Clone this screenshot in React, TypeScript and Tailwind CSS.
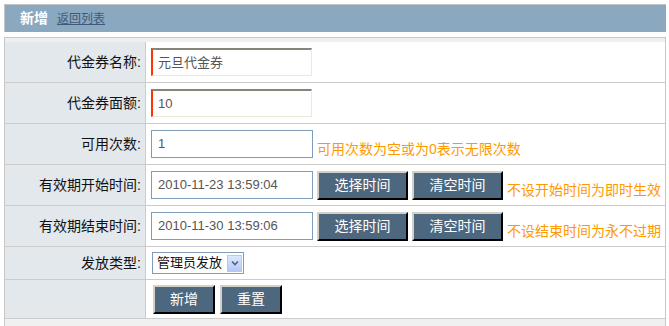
import React from "react";

const font = { fontFamily: '"Liberation Sans", "Noto Sans CJK SC", sans-serif' };

function Label({ text }: { text: string }) {
  return (
    <div className="w-[141px] shrink-0 self-stretch flex items-center justify-end pr-[4px] bg-[#e3e8ec] border-r border-[#cccccc] text-[14px] text-[#111]">
      {text}
    </div>
  );
}

function Row({ label, h = "h-[41px]", children }: { label: string; h?: string; children?: React.ReactNode }) {
  return (
    <div className={`flex ${h} border-b border-[#cccccc]`}>
      <Label text={label} />
      <div className="flex-1 flex items-center pl-[5px] bg-white">{children}</div>
    </div>
  );
}

function RedInput({ value }: { value: string }) {
  return (
    <div className="w-[161px] h-[28px] bg-white border-t-2 border-t-[#87847a] border-l-2 border-l-[#ff3300] border-r border-r-[#ece9d8] border-b border-b-[#ece9d8] flex items-center pl-[5px] text-[13px] text-[#555]">
      {value}
    </div>
  );
}

function BlueInput({ value }: { value: string }) {
  return (
    <div className="w-[162px] h-[28px] bg-white border border-[#7f9db9] flex items-center pl-[6px] text-[13px] text-[#555]">
      {value}
    </div>
  );
}

function Btn({ text, w = "w-[91px]" }: { text: string; w?: string }) {
  return (
    <div className={`${w} h-[29px] bg-[#4d677e] border-2 border-t-[#d4d0c8] border-l-[#d4d0c8] border-r-black border-b-black flex items-center justify-center text-white text-[14px]`}>
      {text}
    </div>
  );
}

function Hint({ text }: { text: string }) {
  return <span className="text-[14px] text-[#ff9900] pt-[10px] pl-[4px] whitespace-nowrap">{text}</span>;
}

export default function App() {
  return (
    <div className="w-[669px] h-[326px] bg-white overflow-hidden pt-[4px] pl-[4px]" style={font}>
      <div className="w-[662px] h-[28px] bg-[#8aa8c0] border-t border-l border-[#c4c4c4] flex items-center pl-[15px]">
        <span className="text-white font-bold text-[14px]">新增</span>
        <span className="ml-[9px] text-[12px] text-[#3f5a78] underline">返回列表</span>
      </div>
      <div className="mt-[5px] w-[662px] border-t border-l border-r border-[#c8c8c8]">
        <div className="h-[4px] bg-[#f0f0f0]" />
        <Row label="代金券名称:">
          <RedInput value="元旦代金券" />
        </Row>
        <Row label="代金券面额:">
          <RedInput value="10" />
        </Row>
        <Row label="可用次数:">
          <BlueInput value="1" />
          <Hint text="可用次数为空或为0表示无限次数" />
        </Row>
        <Row label="有效期开始时间:">
          <BlueInput value="2010-11-23 13:59:04" />
          <div className="ml-[4px]"><Btn text="选择时间" /></div>
          <div className="ml-[4px]"><Btn text="清空时间" /></div>
          <Hint text="不设开始时间为即时生效" />
        </Row>
        <Row label="有效期结束时间:">
          <BlueInput value="2010-11-30 13:59:06" />
          <div className="ml-[4px]"><Btn text="选择时间" /></div>
          <div className="ml-[4px]"><Btn text="清空时间" /></div>
          <Hint text="不设结束时间为永不过期" />
        </Row>
        <Row label="发放类型:" h="h-[33px]">
          <div className="ml-[1px] w-[92px] h-[22px] border border-[#7f9db9] bg-white flex items-center justify-between pl-[4px] pr-[1px] text-[13px] text-[#111]">
            <span>管理员发放</span>
            <div className="w-[15px] h-[17px] bg-gradient-to-b from-[#dde8fd] to-[#b4c8f4] border border-[#b4c8f4] flex items-center justify-center">
              <svg width="8" height="6" viewBox="0 0 8 6">
                <path d="M1 1.5 L4 4.5 L7 1.5" stroke="#4d6185" strokeWidth="1.6" fill="none" />
              </svg>
            </div>
          </div>
        </Row>
        <div className="flex h-[39px] border-b border-[#cccccc]">
          <div className="w-[141px] shrink-0 bg-[#e3e8ec] border-r border-[#cccccc]" />
          <div className="flex-1 flex items-center pl-[7px] bg-white">
            <Btn text="新增" w="w-[62px]" />
            <div className="ml-[5px]"><Btn text="重置" w="w-[62px]" /></div>
          </div>
        </div>
        <div className="h-[8px] bg-[#f0f0f0]" />
      </div>
    </div>
  );
}
